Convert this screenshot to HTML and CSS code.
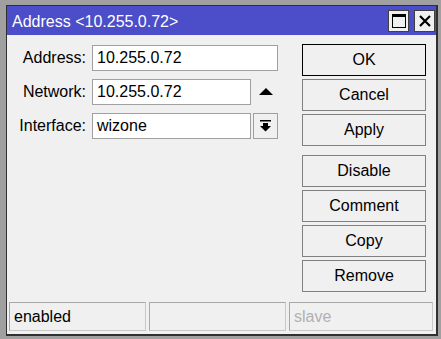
FILE: index.html
```html
<!DOCTYPE html>
<html>
<head>
<meta charset="utf-8">
<link rel="stylesheet" href="styles.css">
</head>
<body>
<div class="win">
  <div class="titlebar">
    <span class="title">Address &lt;10.255.0.72&gt;</span>
    <div class="tbtns">
      <div class="tbtn"><svg width="14" height="14" viewBox="0 0 14 14"><rect x="0.5" y="0.5" width="13" height="13" fill="none" stroke="#000"/><rect x="0" y="0" width="14" height="3" fill="#000"/></svg></div>
      <div class="tbtn"><svg width="12" height="12" viewBox="0 0 12 12"><path d="M1 1 L11 11 M11 1 L1 11" stroke="#000" stroke-width="2.2"/></svg></div>
    </div>
  </div>
  <div class="body">
    <div class="form">
      <div class="row">
        <label class="lbl">Address:</label>
        <div class="field wide">10.255.0.72</div>
      </div>
      <div class="row">
        <label class="lbl">Network:</label>
        <div class="field">10.255.0.72</div>
        <svg class="up" width="14" height="7" viewBox="0 0 14 7"><path d="M0 7 L7 0 L14 7 Z" fill="#000"/></svg>
      </div>
      <div class="row">
        <label class="lbl">Interface:</label>
        <div class="field">wizone</div>
        <div class="ddbtn"><svg width="11" height="12" viewBox="0 0 11 12"><rect x="0" y="0" width="11" height="1.5" fill="#000"/><path d="M3 3 H8 V6 H11 L5.5 11.5 L0 6 H3 Z" fill="#000"/></svg></div>
      </div>
    </div>
    <div class="btns">
      <div class="btn default">OK</div>
      <div class="btn">Cancel</div>
      <div class="btn">Apply</div>
      <div class="btn sep">Disable</div>
      <div class="btn">Comment</div>
      <div class="btn">Copy</div>
      <div class="btn">Remove</div>
    </div>
  </div>
  <div class="status">
    <div class="cell">enabled</div>
    <div class="cell"></div>
    <div class="cell dim">slave</div>
  </div>
</div>
</body>
</html>
```

FILE: styles.css
```css
html, body {
  margin: 0;
  padding: 0;
  background: #a0a0a0;
  font-family: "Liberation Sans", Arial, sans-serif;
  font-size: 16px;
  color: #000;
}
body {
  padding: 5px 4px 0 6px;
}
.win {
  width: 429px;
  height: 328px;
  border: 1px solid #303030;
  border-right-width: 2px;
  border-bottom-width: 2px;
  background: #f0f0f0;
  display: flex;
  flex-direction: column;
}
.titlebar {
  height: 29px;
  background: #4b4dc9;
  display: flex;
  align-items: center;
  justify-content: space-between;
  padding: 0 1px 0 5px;
}
.title {
  color: #fff;
  position: relative;
  top: 1px;
}
.tbtns {
  display: flex;
  gap: 5px;
  margin-top: 1px;
}
.tbtn {
  width: 19px;
  height: 20px;
  background: #f0f0f0;
  border: 1px solid #404040;
  display: flex;
  align-items: center;
  justify-content: center;
}
.body {
  flex: 1;
  display: flex;
  padding-top: 9px;
}
.form {
  display: flex;
  flex-direction: column;
  gap: 8px;
  width: 295px;
  padding-top: 1px;
}
.row {
  display: flex;
  align-items: center;
  height: 26px;
}
.lbl {
  width: 79px;
  text-align: right;
  margin-right: 6px;
}
.field {
  height: 24px;
  line-height: 24px;
  border: 1px solid #a0a0a0;
  background: #fff;
  padding-left: 4px;
  width: 153px;
}
.field.wide {
  width: 180px;
}
.up {
  margin-left: 8px;
  margin-top: -1px;
}
.ddbtn {
  width: 23px;
  height: 24px;
  margin-left: 2px;
  border: 1px solid #a0a0a0;
  display: flex;
  align-items: center;
  justify-content: center;
}
.btns {
  display: flex;
  flex-direction: column;
  gap: 3px;
}
.btn {
  width: 122px;
  height: 30px;
  border: 1px solid #808080;
  display: flex;
  align-items: center;
  justify-content: center;
}
.btn.default {
  border-color: #000;
}
.btn.sep {
  margin-top: 6px;
}
.status {
  margin-top: auto;
  display: flex;
  gap: 3px;
  padding: 0 3px 3px 2px;
}
.cell {
  height: 27px;
  border: 1px solid #c8c8c8;
  border-top-color: #a8a8a8;
  border-left-color: #a8a8a8;
  line-height: 27px;
  padding-left: 4px;
  width: 132px;
}
.cell:last-child {
  width: 139px;
}
.dim {
  color: #b0b0b0;
}
```
